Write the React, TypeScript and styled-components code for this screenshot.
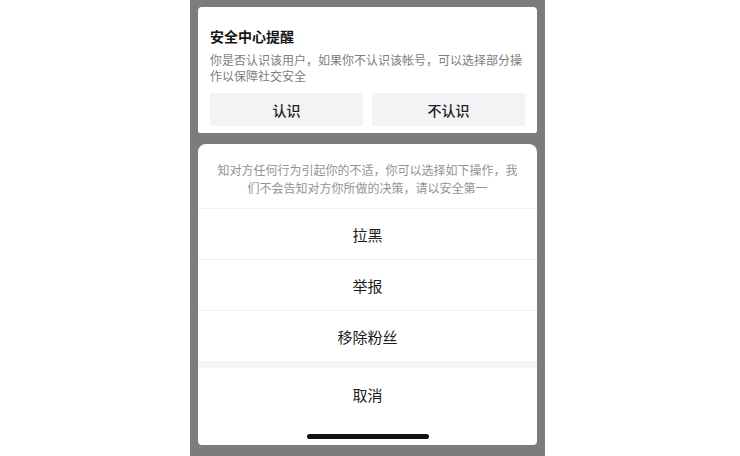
import React from "react";
import styled, { createGlobalStyle } from "styled-components";

const GlobalStyle = createGlobalStyle`
  html, body {
    margin: 0;
    padding: 0;
    background: #fff;
  }
  body {
    font-family: "Noto Sans CJK SC", "Noto Sans", sans-serif;
  }
`;

const Frame = styled.div`
  width: 355px;
  height: 456px;
  margin-left: 190px;
  box-sizing: border-box;
  padding: 7px 8px 11px 8px;
  background: #7c7c7c;
  display: flex;
  flex-direction: column;
  gap: 11px;
`;

const Card = styled.section`
  background: #fff;
  border-radius: 4px 4px 2px 2px;
  padding: 19px 12px 7px 12px;
`;

const Title = styled.h3`
  margin: 0;
  font-size: 14px;
  line-height: 20px;
  font-weight: 700;
  color: #161616;
`;

const Desc = styled.p`
  margin: 6px 0 0 0;
  font-size: 12px;
  line-height: 16px;
  color: #7e7e7e;
`;

const BtnRow = styled.div`
  display: grid;
  grid-template-columns: 1fr 1fr;
  gap: 9px;
  margin-top: 9px;
`;

const Btn = styled.button`
  height: 33px;
  border: none;
  border-radius: 2px;
  background: #f3f3f5;
  font-family: inherit;
  font-size: 14px;
  font-weight: 500;
  color: #222;
  padding: 0;
`;

const Sheet = styled.section`
  flex: 1;
  background: #fff;
  border-radius: 8px 8px 4px 4px;
  display: flex;
  flex-direction: column;
  overflow: hidden;
`;

const Notice = styled.p`
  margin: 0;
  padding: 17px 18px 11px 18px;
  text-align: center;
  font-size: 12px;
  line-height: 18px;
  color: #939393;
`;

const Option = styled.div<{ $tall?: boolean }>`
  height: ${(p) => (p.$tall ? "52px" : "50px")};
  border-top: ${(p) => (p.$tall ? "none" : "1px solid #f1f1f1")};
  display: flex;
  align-items: center;
  justify-content: center;
  font-size: 15px;
  color: #1c1c1c;
`;

const Spacer = styled.div`
  height: 7px;
  background: #f4f4f5;
`;

const HomeBar = styled.div`
  display: flex;
  justify-content: center;
  padding: 14px 0 5px;
  &::after {
    content: "";
    width: 122px;
    height: 5px;
    border-radius: 3px;
    background: #111;
  }
`;

const options = ["拉黑", "举报", "移除粉丝"];

export default function App() {
  return (
    <>
      <GlobalStyle />
      <Frame>
        <Card>
          <Title>安全中心提醒</Title>
          <Desc>你是否认识该用户，如果你不认识该帐号，可以选择部分操作以保障社交安全</Desc>
          <BtnRow>
            <Btn>认识</Btn>
            <Btn>不认识</Btn>
          </BtnRow>
        </Card>
        <Sheet>
          <Notice>
            知对方任何行为引起你的不适，你可以选择如下操作，我们不会告知对方你所做的决策，请以安全第一
          </Notice>
          {options.map((o) => (
            <Option key={o}>{o}</Option>
          ))}
          <Spacer />
          <Option $tall>取消</Option>
          <HomeBar />
        </Sheet>
      </Frame>
    </>
  );
}
